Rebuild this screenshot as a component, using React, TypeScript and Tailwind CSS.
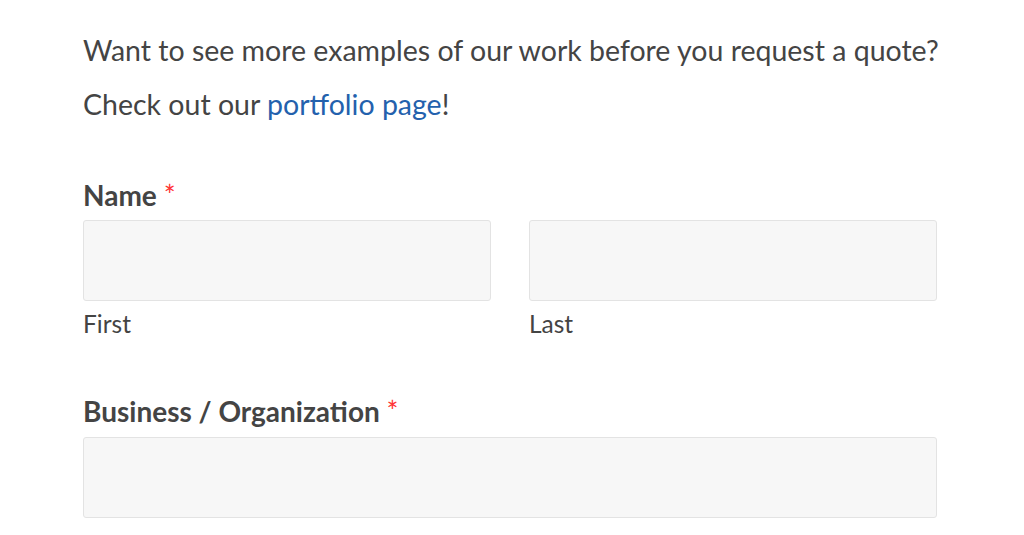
export default function App() {
  return (
    <div className="min-h-screen bg-white font-['Lato',sans-serif] text-[#444444]">
      <div className="w-[854px] ml-[83px] pt-[23px]">
        <p className="text-[28.5px] leading-[54px] whitespace-nowrap">
          Want to see more examples of our work before you request a quote?
          <br />
          Check out our <a href="#" className="text-[#2361ad]">portfolio page</a>!
        </p>

        <div className="mt-[46px]">
          <label className="block text-[28px] font-bold leading-[36px]">
            Name <span className="text-[#ff3333] font-normal">*</span>
          </label>
          <div className="mt-[7px] grid grid-cols-2 gap-[38px]">
            <div>
              <input className="block w-full h-[81px] rounded-[3px] border border-[#e3e3e3] bg-[#f7f7f7]" />
              <div className="text-[24.5px] leading-[46px]">First</div>
            </div>
            <div>
              <input className="block w-full h-[81px] rounded-[3px] border border-[#e3e3e3] bg-[#f7f7f7]" />
              <div className="text-[24.5px] leading-[46px]">Last</div>
            </div>
          </div>
        </div>

        <div className="mt-[46px]">
          <label className="block text-[28px] font-bold leading-[36px]">
            Business / Organization <span className="text-[#ff3333] font-normal">*</span>
          </label>
          <input className="mt-[8px] block w-full h-[81px] rounded-[3px] border border-[#e3e3e3] bg-[#f7f7f7]" />
        </div>
      </div>
    </div>
  )
}
